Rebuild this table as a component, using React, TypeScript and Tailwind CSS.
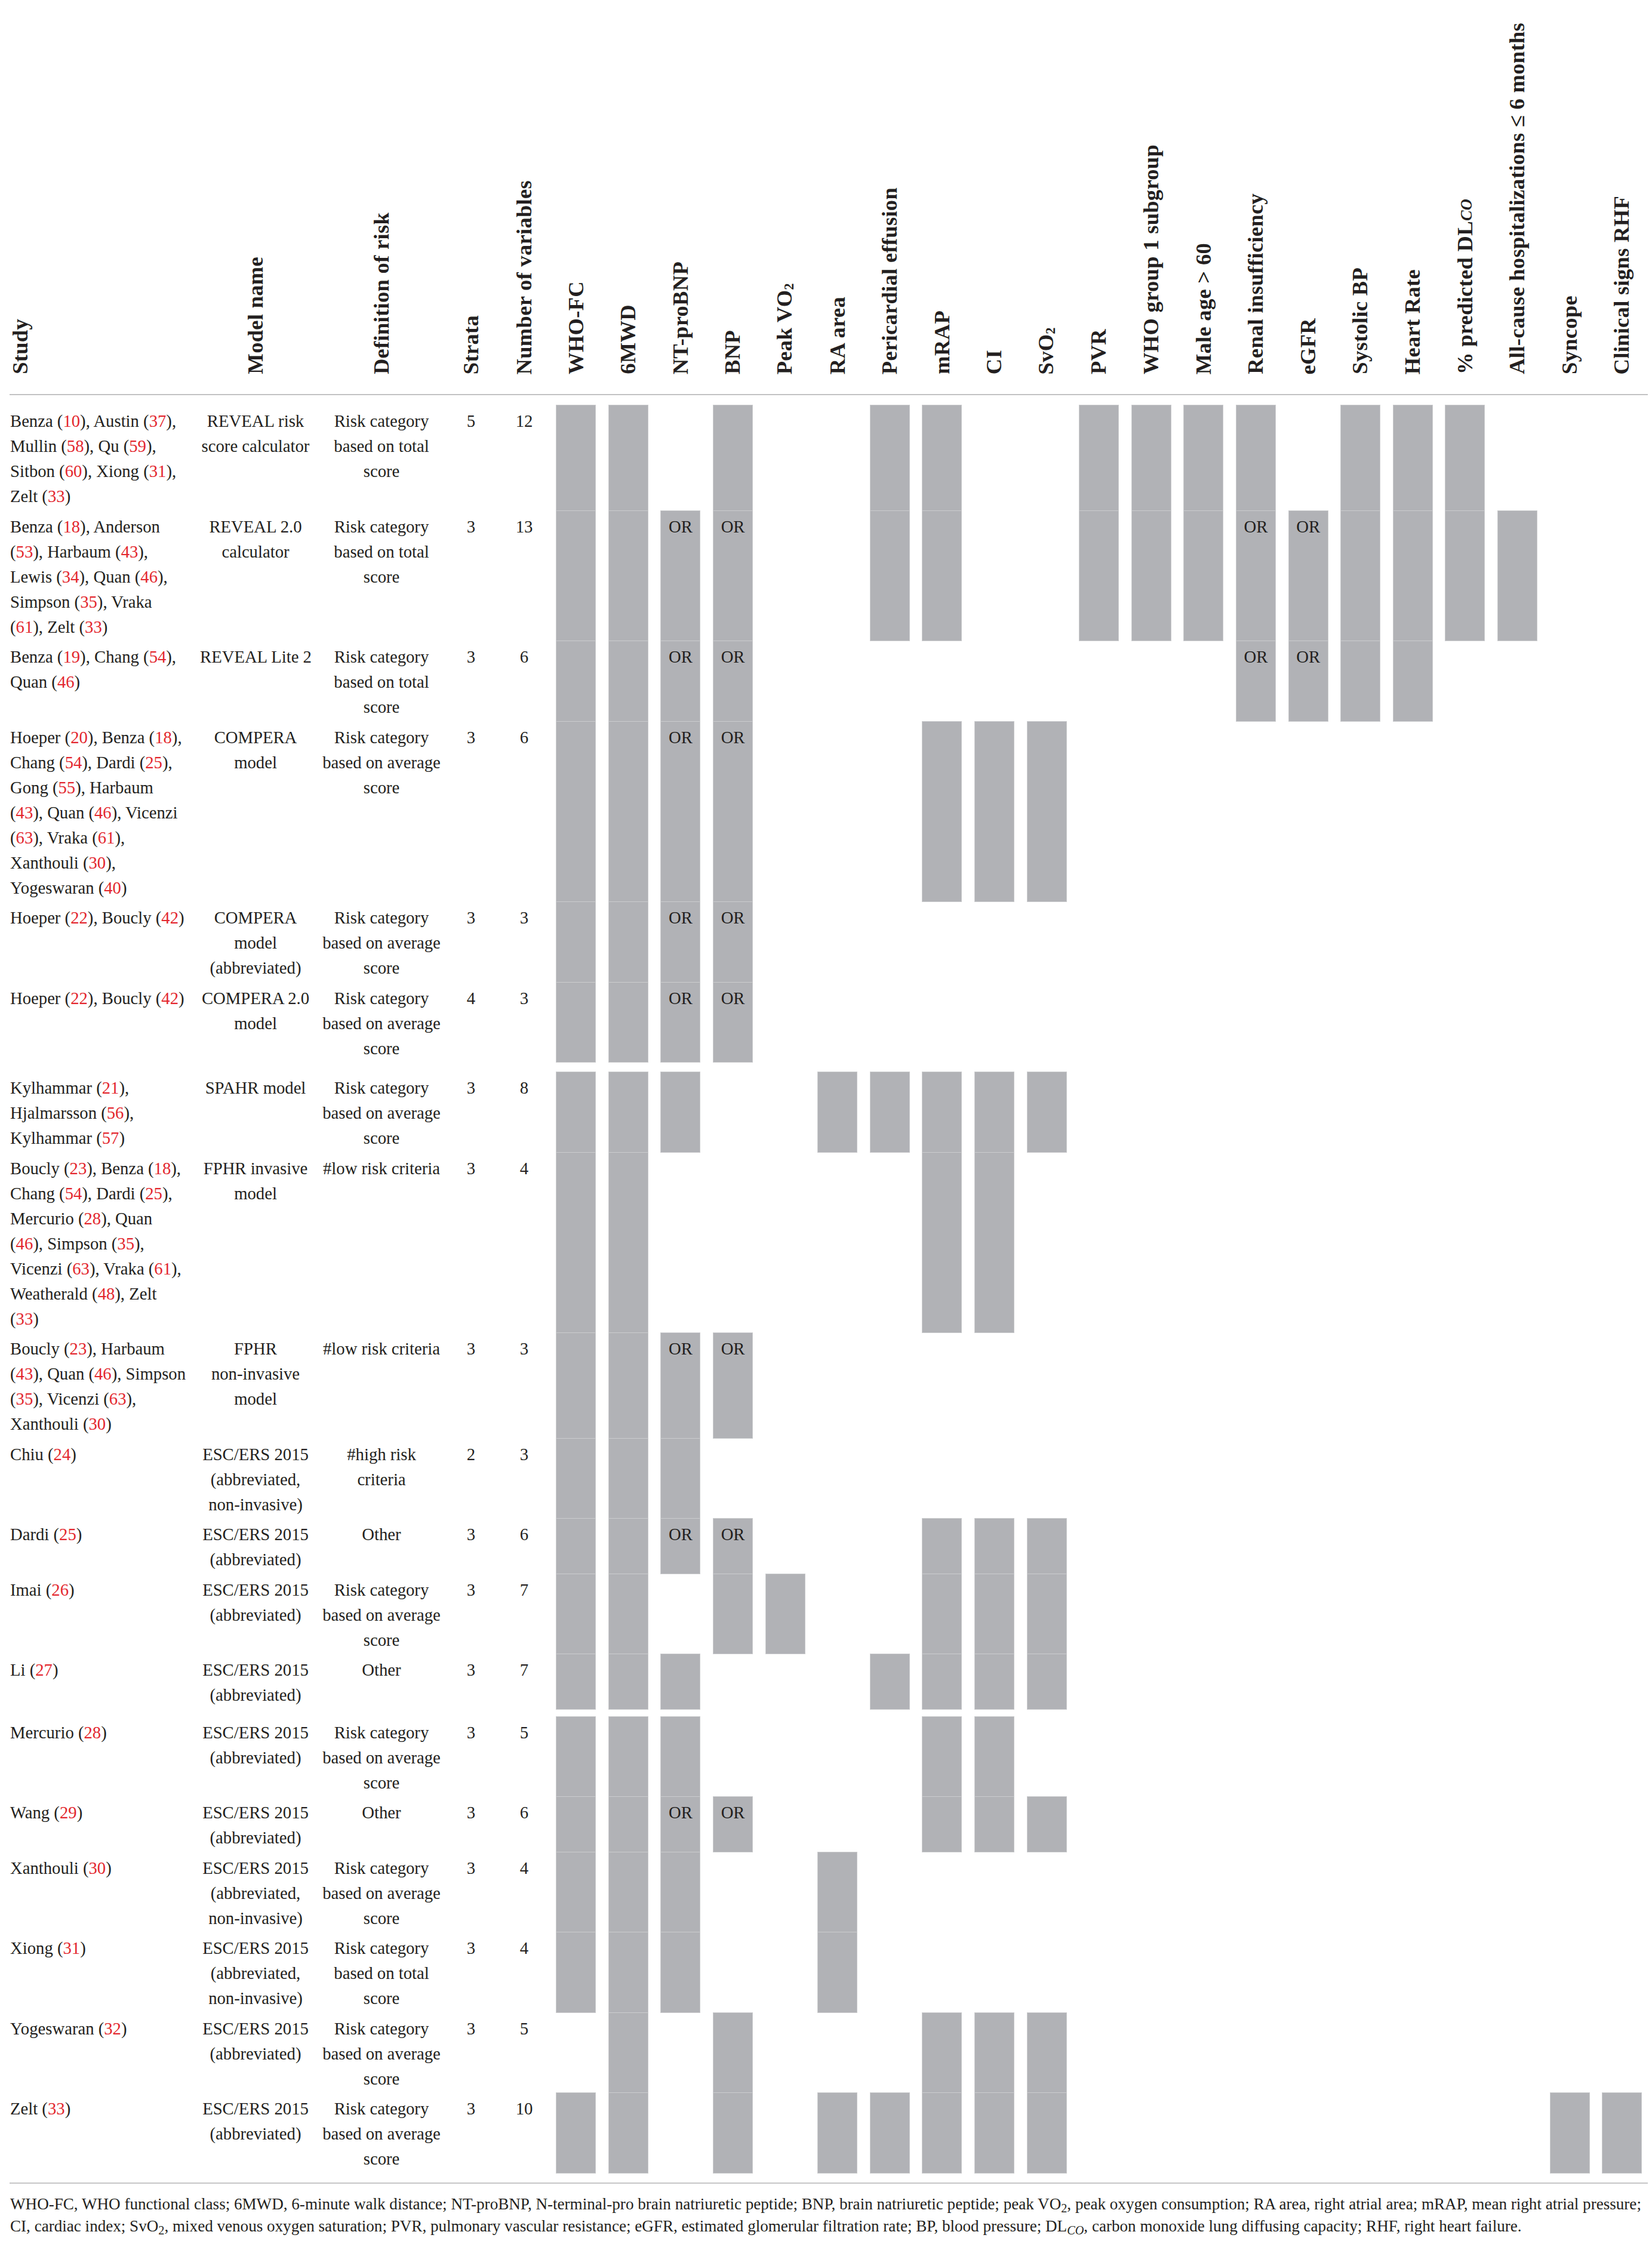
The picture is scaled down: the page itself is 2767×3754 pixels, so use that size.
import React from "react";

const COLS = "grid grid-cols-[319px_186px_236px_64px_100px_repeat(21,87.6px)]";

type Row = {
  study: string[];
  model: string[];
  def: string[];
  strata: string;
  n: string;
  bars: number[];
  or?: number[];
  gapAfter?: number;
};

const rows: Row[] = [
  {
    study: ["Benza (10), Austin (37),", "Mullin (58), Qu (59),", "Sitbon (60), Xiong (31),", "Zelt (33)"],
    model: ["REVEAL risk", "score calculator"],
    def: ["Risk category", "based on total", "score"],
    strata: "5",
    n: "12",
    bars: [0, 1, 3, 6, 7, 10, 11, 12, 13, 15, 16, 17],
  },
  {
    study: ["Benza (18), Anderson", "(53), Harbaum (43),", "Lewis (34), Quan (46),", "Simpson (35), Vraka", "(61), Zelt (33)"],
    model: ["REVEAL 2.0", "calculator"],
    def: ["Risk category", "based on total", "score"],
    strata: "3",
    n: "13",
    bars: [0, 1, 2, 3, 6, 7, 10, 11, 12, 13, 14, 15, 16, 17, 18],
    or: [2, 3, 13, 14],
  },
  {
    study: ["Benza (19), Chang (54),", "Quan (46)"],
    model: ["REVEAL Lite 2"],
    def: ["Risk category", "based on total", "score"],
    strata: "3",
    n: "6",
    bars: [0, 1, 2, 3, 13, 14, 15, 16],
    or: [2, 3, 13, 14],
  },
  {
    study: [
      "Hoeper (20), Benza (18),",
      "Chang (54), Dardi (25),",
      "Gong (55), Harbaum",
      "(43), Quan (46), Vicenzi",
      "(63), Vraka (61),",
      "Xanthouli (30),",
      "Yogeswaran (40)",
    ],
    model: ["COMPERA", "model"],
    def: ["Risk category", "based on average", "score"],
    strata: "3",
    n: "6",
    bars: [0, 1, 2, 3, 7, 8, 9],
    or: [2, 3],
  },
  {
    study: ["Hoeper (22), Boucly (42)"],
    model: ["COMPERA", "model", "(abbreviated)"],
    def: ["Risk category", "based on average", "score"],
    strata: "3",
    n: "3",
    bars: [0, 1, 2, 3],
    or: [2, 3],
  },
  {
    study: ["Hoeper (22), Boucly (42)"],
    model: ["COMPERA 2.0", "model"],
    def: ["Risk category", "based on average", "score"],
    strata: "4",
    n: "3",
    bars: [0, 1, 2, 3],
    or: [2, 3],
    gapAfter: 16,
  },
  {
    study: ["Kylhammar (21),", "Hjalmarsson (56),", "Kylhammar (57)"],
    model: ["SPAHR model"],
    def: ["Risk category", "based on average", "score"],
    strata: "3",
    n: "8",
    bars: [0, 1, 2, 5, 6, 7, 8, 9],
  },
  {
    study: [
      "Boucly (23), Benza (18),",
      "Chang (54), Dardi (25),",
      "Mercurio (28), Quan",
      "(46), Simpson (35),",
      "Vicenzi (63), Vraka (61),",
      "Weatherald (48), Zelt",
      "(33)",
    ],
    model: ["FPHR invasive", "model"],
    def: ["#low risk criteria"],
    strata: "3",
    n: "4",
    bars: [0, 1, 7, 8],
  },
  {
    study: ["Boucly (23), Harbaum", "(43), Quan (46), Simpson", "(35), Vicenzi (63),", "Xanthouli (30)"],
    model: ["FPHR", "non-invasive", "model"],
    def: ["#low risk criteria"],
    strata: "3",
    n: "3",
    bars: [0, 1, 2, 3],
    or: [2, 3],
  },
  {
    study: ["Chiu (24)"],
    model: ["ESC/ERS 2015", "(abbreviated,", "non-invasive)"],
    def: ["#high risk", "criteria"],
    strata: "2",
    n: "3",
    bars: [0, 1, 2],
  },
  {
    study: ["Dardi (25)"],
    model: ["ESC/ERS 2015", "(abbreviated)"],
    def: ["Other"],
    strata: "3",
    n: "6",
    bars: [0, 1, 2, 3, 7, 8, 9],
    or: [2, 3],
  },
  {
    study: ["Imai (26)"],
    model: ["ESC/ERS 2015", "(abbreviated)"],
    def: ["Risk category", "based on average", "score"],
    strata: "3",
    n: "7",
    bars: [0, 1, 3, 4, 7, 8, 9],
  },
  {
    study: ["Li (27)"],
    model: ["ESC/ERS 2015", "(abbreviated)"],
    def: ["Other"],
    strata: "3",
    n: "7",
    bars: [0, 1, 2, 6, 7, 8, 9],
    gapAfter: 12,
  },
  {
    study: ["Mercurio (28)"],
    model: ["ESC/ERS 2015", "(abbreviated)"],
    def: ["Risk category", "based on average", "score"],
    strata: "3",
    n: "5",
    bars: [0, 1, 2, 7, 8],
  },
  {
    study: ["Wang (29)"],
    model: ["ESC/ERS 2015", "(abbreviated)"],
    def: ["Other"],
    strata: "3",
    n: "6",
    bars: [0, 1, 2, 3, 7, 8, 9],
    or: [2, 3],
  },
  {
    study: ["Xanthouli (30)"],
    model: ["ESC/ERS 2015", "(abbreviated,", "non-invasive)"],
    def: ["Risk category", "based on average", "score"],
    strata: "3",
    n: "4",
    bars: [0, 1, 2, 5],
  },
  {
    study: ["Xiong (31)"],
    model: ["ESC/ERS 2015", "(abbreviated,", "non-invasive)"],
    def: ["Risk category", "based on total", "score"],
    strata: "3",
    n: "4",
    bars: [0, 1, 2, 5],
  },
  {
    study: ["Yogeswaran (32)"],
    model: ["ESC/ERS 2015", "(abbreviated)"],
    def: ["Risk category", "based on average", "score"],
    strata: "3",
    n: "5",
    bars: [1, 3, 7, 8, 9],
  },
  {
    study: ["Zelt (33)"],
    model: ["ESC/ERS 2015", "(abbreviated)"],
    def: ["Risk category", "based on average", "score"],
    strata: "3",
    n: "10",
    bars: [0, 1, 3, 5, 6, 7, 8, 9, 19, 20],
  },
];

const headers: React.ReactNode[] = [
  "WHO-FC",
  "6MWD",
  "NT-proBNP",
  "BNP",
  <>
    Peak VO<span className="align-sub text-[0.62em]">2</span>
  </>,
  "RA area",
  "Pericardial effusion",
  "mRAP",
  "CI",
  <>
    SvO<span className="align-sub text-[0.62em]">2</span>
  </>,
  "PVR",
  "WHO group 1 subgroup",
  "Male age > 60",
  "Renal insufficiency",
  "eGFR",
  "Systolic BP",
  "Heart Rate",
  <>
    % predicted DL<span className="align-[-0.12em] text-[0.72em] italic">CO</span>
  </>,
  "All-cause hospitalizations ≤ 6 months",
  "Syncope",
  "Clinical signs RHF",
];

function StudyLine({ text }: { text: string }) {
  const parts = text.split(/(\d+)/);
  return (
    <div className="whitespace-nowrap">
      {parts.map((p, i) =>
        /^\d+$/.test(p) ? (
          <span key={i} className="text-[#e3262d]">
            {p}
          </span>
        ) : (
          <span key={i}>{p}</span>
        )
      )}
    </div>
  );
}

function VText({ children }: { children: React.ReactNode }) {
  return (
    <span className="[writing-mode:vertical-rl] rotate-180 whitespace-nowrap leading-none tracking-[0.3px]">
      {children}
    </span>
  );
}

export default function App() {
  return (
    <div
      className="relative w-[2767px] h-[3754px] overflow-hidden bg-white text-[#231f20]"
      style={{ fontFamily: '"Liberation Serif", "Times New Roman", serif' }}
    >
      {/* header */}
      <div className={`${COLS} ml-[16px] h-[660px] text-[36.5px] font-bold`}>
        <div className="flex items-end justify-start pb-[33px]">
          <VText>Study</VText>
        </div>
        <div className="flex items-end justify-center pb-[33px]">
          <VText>Model name</VText>
        </div>
        <div className="flex items-end justify-center pb-[33px]">
          <VText>Definition of risk</VText>
        </div>
        <div className="flex items-end justify-center pb-[33px]">
          <VText>Strata</VText>
        </div>
        <div className="flex items-end justify-center pb-[33px] pl-[14px]">
          <VText>Number of variables</VText>
        </div>
        {headers.map((h, i) => (
          <div key={i} className="flex items-end justify-center pb-[33px]">
            <VText>{h}</VText>
          </div>
        ))}
      </div>
      <div className="ml-[16px] w-[2744px] h-[2px] bg-[#c2c2c3]" />
      <div className="h-[16px]" />

      {/* body */}
      <div className="text-[28.7px] leading-[42px]">
        {rows.map((r, ri) => (
          <React.Fragment key={ri}>
            <div className={`${COLS} ml-[16px]`}>
              <div className="pt-[6px] pb-[2.5px] pl-[1px]">
                {r.study.map((l, i) => (
                  <StudyLine key={i} text={l} />
                ))}
              </div>
              <div className="pt-[6px] pb-[2.5px] text-center">
                {r.model.map((l, i) => (
                  <div key={i} className="whitespace-nowrap">
                    {l}
                  </div>
                ))}
              </div>
              <div className="pt-[6px] pb-[2.5px] text-center">
                {r.def.map((l, i) => (
                  <div key={i} className="whitespace-nowrap">
                    {l}
                  </div>
                ))}
              </div>
              <div className="pt-[6px] pb-[2.5px] text-center">{r.strata}</div>
              <div className="pt-[6px] pb-[2.5px] pl-[14px] text-center">{r.n}</div>
              {Array.from({ length: 21 }).map((_, ci) => {
                const has = r.bars.includes(ci);
                const isOr = r.or?.includes(ci);
                return (
                  <div key={ci} className="flex justify-center">
                    {has ? (
                      <div className="w-[67px] -mb-px bg-[#b1b2b6] border border-[#cbccce]">
                        {isOr ? (
                          <div className="pt-[5px] text-center whitespace-nowrap">OR</div>
                        ) : null}
                      </div>
                    ) : null}
                  </div>
                );
              })}
            </div>
            {r.gapAfter ? (
              <div className={r.gapAfter === 16 ? "h-[16px]" : "h-[12px]"} />
            ) : null}
          </React.Fragment>
        ))}
      </div>

      <div className="h-[16.5px]" />
      <div className="ml-[16px] w-[2744px] h-[2px] bg-[#c6c6c7]" />

      {/* footnote */}
      <div className="pl-[17px] pt-[16px] text-[27.1px] leading-[37px]">
        <div className="whitespace-nowrap">
          WHO-FC, WHO functional class; 6MWD, 6-minute walk distance; NT-proBNP, N-terminal-pro brain natriuretic
          peptide; BNP, brain natriuretic peptide; peak VO<sub>2</sub>, peak oxygen consumption; RA area, right atrial
          area; mRAP, mean right atrial pressure;
        </div>
        <div className="whitespace-nowrap">
          CI, cardiac index; SvO<sub>2</sub>, mixed venous oxygen saturation; PVR, pulmonary vascular resistance; eGFR,
          estimated glomerular filtration rate; BP, blood pressure; DL<sub className="italic">CO</sub>, carbon monoxide
          lung diffusing capacity; RHF, right heart failure.
        </div>
      </div>
    </div>
  );
}
